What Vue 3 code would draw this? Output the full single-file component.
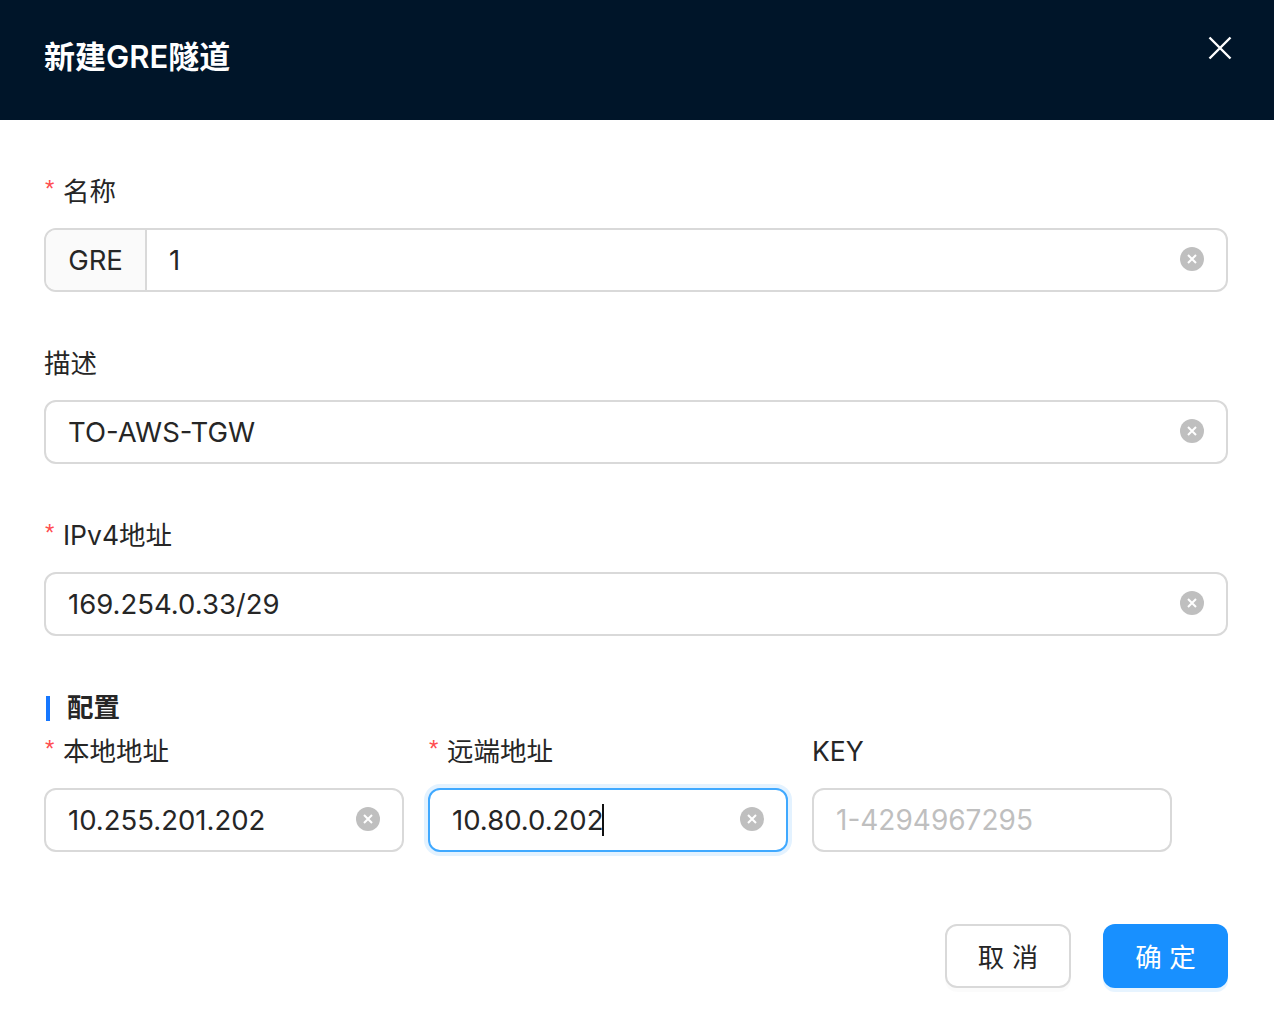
<script setup>
</script>

<template>
  <div class="modal">
    <header class="head">
      <h1 class="title">新建GRE隧道</h1>
      <svg class="close" width="24" height="24" viewBox="0 0 24 24" fill="none" stroke="#fff" stroke-width="2.4">
        <path d="M1.5 1.5 22.5 22.5M22.5 1.5 1.5 22.5" />
      </svg>
    </header>

    <main class="body">
      <section class="field">
        <label class="label"><span class="star">*</span>名称</label>
        <div class="box">
          <span class="addon">GRE</span>
          <span class="value">1</span>
          <svg class="clear" viewBox="0 0 24 24"><circle cx="12" cy="12" r="12" fill="#bfbfbf"/><path d="M8 8 16 16M16 8 8 16" stroke="#fff" stroke-width="2"/></svg>
        </div>
      </section>

      <section class="field">
        <label class="label">描述</label>
        <div class="box">
          <span class="value">TO-AWS-TGW</span>
          <svg class="clear" viewBox="0 0 24 24"><circle cx="12" cy="12" r="12" fill="#bfbfbf"/><path d="M8 8 16 16M16 8 8 16" stroke="#fff" stroke-width="2"/></svg>
        </div>
      </section>

      <section class="field">
        <label class="label"><span class="star">*</span>IPv4地址</label>
        <div class="box">
          <span class="value">169.254.0.33/29</span>
          <svg class="clear" viewBox="0 0 24 24"><circle cx="12" cy="12" r="12" fill="#bfbfbf"/><path d="M8 8 16 16M16 8 8 16" stroke="#fff" stroke-width="2"/></svg>
        </div>
      </section>

      <h2 class="section">配置</h2>

      <div class="grid">
        <section>
          <label class="label"><span class="star">*</span>本地地址</label>
          <div class="box">
            <span class="value">10.255.201.202</span>
            <svg class="clear" viewBox="0 0 24 24"><circle cx="12" cy="12" r="12" fill="#bfbfbf"/><path d="M8 8 16 16M16 8 8 16" stroke="#fff" stroke-width="2"/></svg>
          </div>
        </section>
        <section>
          <label class="label"><span class="star">*</span>远端地址</label>
          <div class="box focus">
            <span class="value">10.80.0.202<i class="caret"></i></span>
            <svg class="clear" viewBox="0 0 24 24"><circle cx="12" cy="12" r="12" fill="#bfbfbf"/><path d="M8 8 16 16M16 8 8 16" stroke="#fff" stroke-width="2"/></svg>
          </div>
        </section>
        <section>
          <label class="label">KEY</label>
          <div class="box">
            <span class="value placeholder">1-4294967295</span>
          </div>
        </section>
      </div>

      <footer class="foot">
        <button class="btn ghost">取 消</button>
        <button class="btn primary">确 定</button>
      </footer>
    </main>
  </div>
</template>

<style>
html, body { margin: 0; background: #fff; }
</style>

<style scoped>
.modal {
  width: 1274px;
  height: 1018px;
  background: #fff;
  font-family: Inter, "Noto Sans CJK SC", sans-serif;
  color: #262626;
  overflow: hidden;
}
.head {
  height: 120px;
  background: #001529;
  display: flex;
  justify-content: space-between;
  padding: 0 42px 0 44px;
  box-sizing: border-box;
}
.title {
  margin: 0;
  font-size: 31px;
  font-weight: 600;
  line-height: 114px;
  color: #fff;
}
.close { margin-top: 36px; }
.body { padding: 49px 46px 0 44px; }
.field { margin-bottom: 49px; }
.label {
  display: block;
  height: 44px;
  line-height: 44px;
  font-size: 26.5px;
  margin-bottom: 15px;
  white-space: nowrap;
}
.star {
  display: inline-block;
  width: 19px;
  padding-left: 1px;
  box-sizing: border-box;
  font-size: 24px;
  color: #ff4d4f;
  font-family: "Liberation Sans", sans-serif;
  line-height: 1;
  vertical-align: 4px;
}
.box {
  height: 64px;
  box-sizing: border-box;
  border: 2px solid #d9d9d9;
  border-radius: 12px;
  display: flex;
  align-items: center;
  position: relative;
  overflow: hidden;
  background: #fff;
}
.addon {
  width: 101px;
  height: 100%;
  flex: none;
  box-sizing: border-box;
  border-right: 2px solid #d9d9d9;
  background: #fafafa;
  display: flex;
  align-items: center;
  justify-content: center;
  font-size: 27.5px;
}
.value {
  flex: 1;
  padding-left: 22px;
  padding-top: 1px;
  font-size: 27.5px;
  line-height: 39px;
  white-space: nowrap;
}
.clear {
  width: 24px;
  height: 24px;
  flex: none;
  margin-right: 22px;
  margin-top: -2px;
}
.focus {
  border-color: #40a9ff;
  box-shadow: 0 0 0 4px rgba(24, 144, 255, .12);
  overflow: visible;
}
.caret {
  display: inline-block;
  width: 2px;
  height: 32px;
  margin-left: -2px;
  background: #111;
  vertical-align: -6px;
}
.placeholder {
  color: #bfbfbf;
  font-size: 28px;
}
.section {
  margin: 0;
  height: 45px;
  line-height: 46px;
  margin-top: -1px;
  font-size: 26.5px;
  font-weight: 700;
  padding-left: 23px;
  position: relative;
}
.section::before {
  content: "";
  position: absolute;
  left: 2px;
  top: 12px;
  width: 4px;
  height: 25px;
  background: #1677ff;
}
.grid {
  display: grid;
  grid-template-columns: repeat(3, 360px);
  gap: 24px;
}
.foot {
  display: flex;
  justify-content: flex-end;
  gap: 32px;
  margin-top: 72px;
}
.btn {
  height: 64px;
  border-radius: 12px;
  font-family: inherit;
  font-size: 26.5px;
  padding: 0 0 2px;
  box-sizing: border-box;
}
.ghost {
  width: 126px;
  border: 2px solid #d9d9d9;
  background: #fff;
  color: #262626;
  box-shadow: 0 4px 0 rgba(0, 0, 0, .015);
}
.primary {
  width: 125px;
  border: 0;
  background: #1890ff;
  color: #fff;
  box-shadow: 0 4px 0 rgba(24, 144, 255, .1);
}
</style>
